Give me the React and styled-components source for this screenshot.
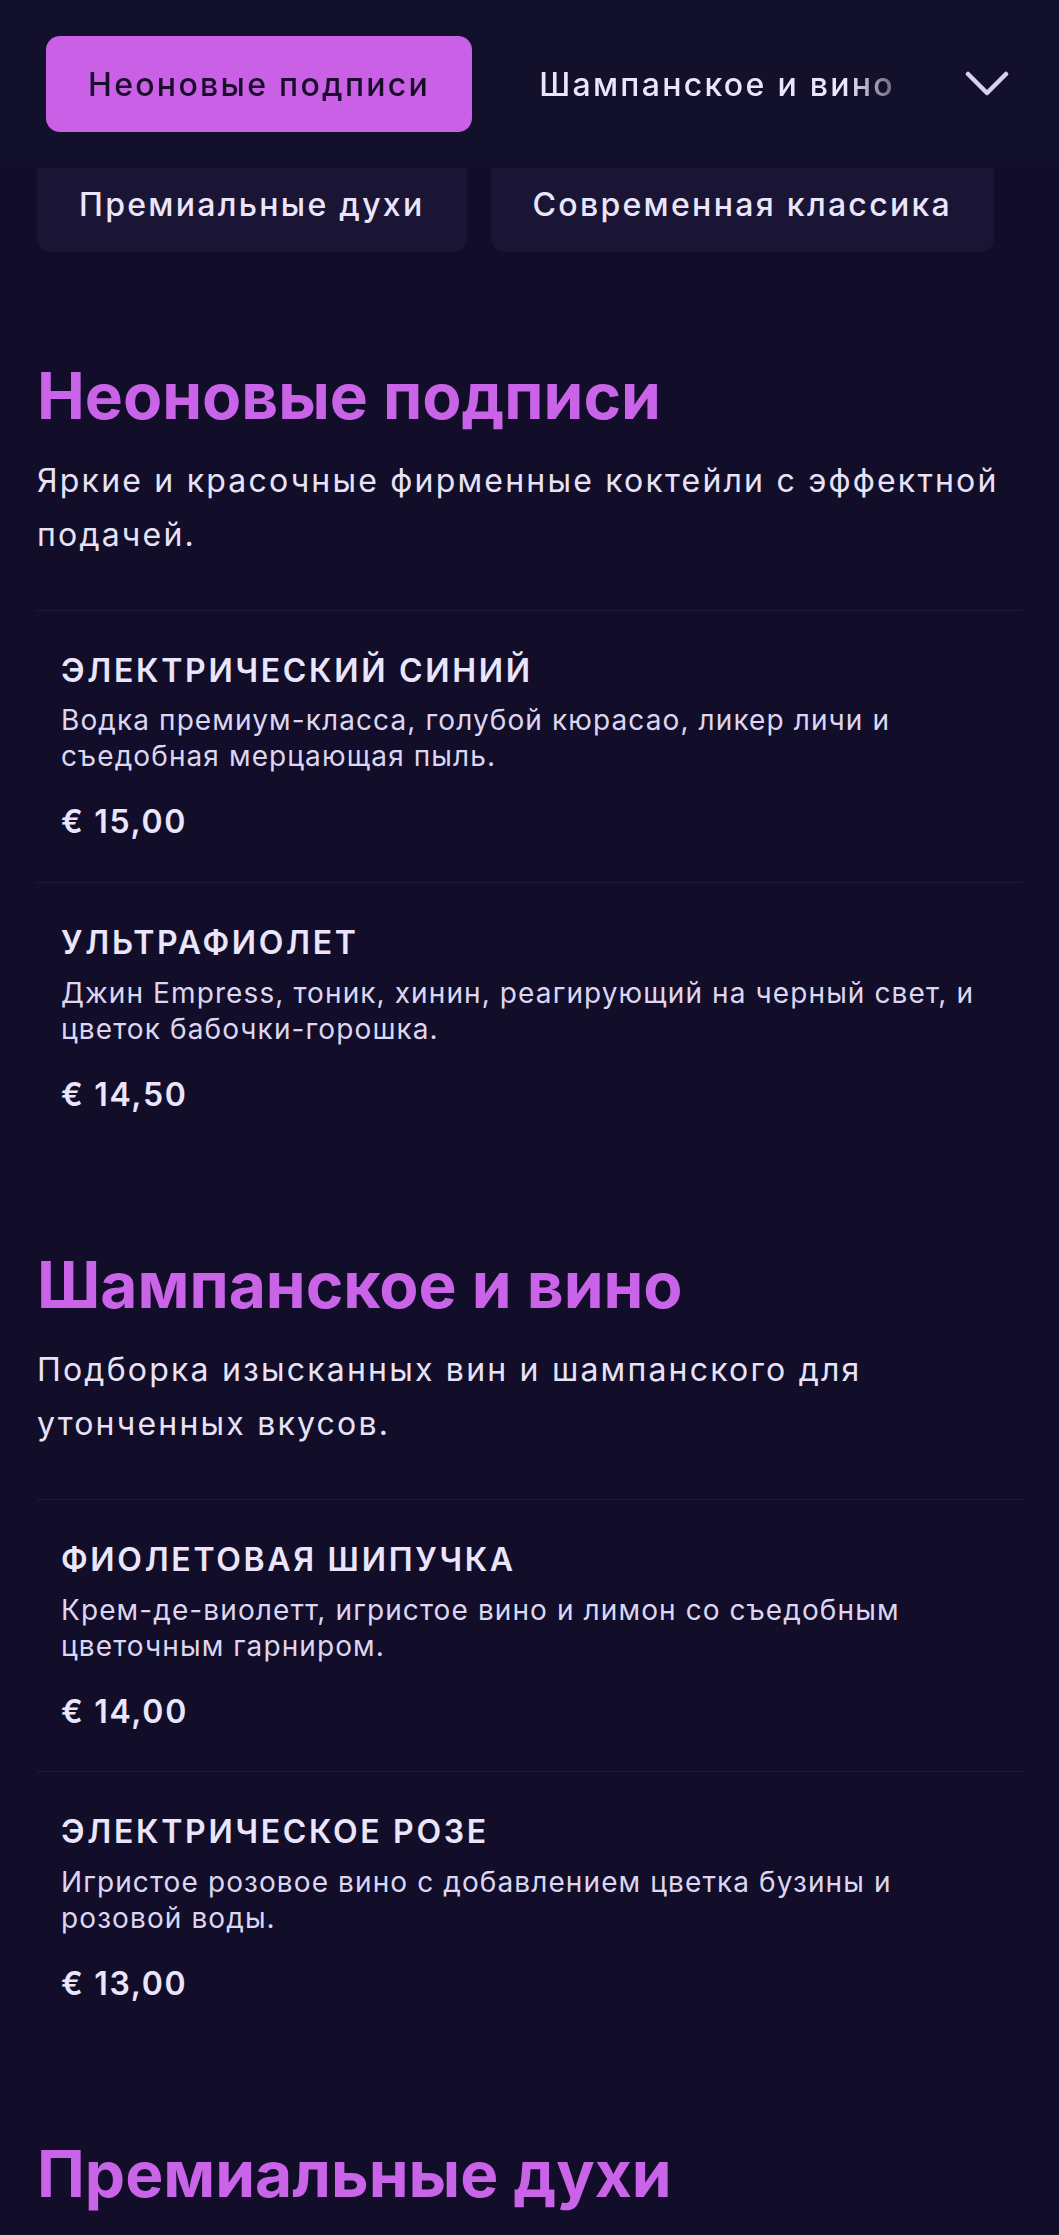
import styled, { createGlobalStyle } from "styled-components";

const GlobalStyle = createGlobalStyle`
  html, body {
    margin: 0;
    padding: 0;
    background: #120e29;
  }
  body {
    font-family: Inter, "Noto Sans", "Liberation Sans", sans-serif;
    color: #ebe5fb;
    -webkit-font-smoothing: antialiased;
  }
  * {
    box-sizing: border-box;
  }
`;

const Page = styled.div`
  width: 1059px;
  min-height: 2235px;
  background: #120e29;
  overflow: hidden;
`;

const Header = styled.header`
  height: 168px;
  display: flex;
  align-items: center;
  padding-left: 46px;
  background: #13102b;
  position: relative;
  z-index: 2;
`;

const TabScroller = styled.div`
  flex: 1;
  display: flex;
  align-items: center;
  gap: 25px;
  overflow: hidden;
  white-space: nowrap;
  mask-image: linear-gradient(to right, #000 calc(100% - 80px), transparent);
`;

const Tab = styled.button`
  flex: none;
  height: 96px;
  padding: 0 42px;
  border: 0;
  border-radius: 14px;
  font-family: inherit;
  font-size: 32px;
  font-weight: 500;
  letter-spacing: 2.3px;
  background: ${(p) => (p.$active ? "#c960e6" : "transparent")};
  color: ${(p) => (p.$active ? "#1a0d2b" : "#ebe5fb")};
`;

const ChevronButton = styled.button`
  flex: none;
  width: 120px;
  margin-right: 12px;
  height: 96px;
  display: flex;
  align-items: center;
  justify-content: center;
  background: transparent;
  border: 0;
  color: #d9d1f2;
`;

const ChipStrip = styled.div`
  height: 84px;
  overflow: hidden;
`;

const ChipRow = styled.div`
  display: flex;
  gap: 24px;
  padding: 0 37px;
  margin-top: -12px;
`;

const Chip = styled.div`
  height: 96px;
  display: flex;
  align-items: center;
  padding: 0 42px;
  border-radius: 14px;
  background: #1b1535;
  font-size: 32px;
  font-weight: 500;
  letter-spacing: 2.3px;
  color: #ebe5fb;
  white-space: nowrap;
`;

const Section = styled.section`
  padding: 106px 37px 0;

  & + & {
    padding-top: 93px;
  }
`;

const SectionTitle = styled.h2`
  margin: 0;
  font-size: 64px;
  line-height: 1.2;
  font-weight: 700;
  color: #c964e8;
`;

const SectionText = styled.p`
  margin: 19px 0 0;
  font-size: 32px;
  line-height: 54px;
  letter-spacing: 2.2px;
  color: #e8e2f8;
`;

const ItemList = styled.div`
  margin-top: 48px;
`;

const Item = styled.article`
  padding: 39px 24px 39px;
  border-top: 1px solid #1f1a39;
`;

const ItemName = styled.h3`
  margin: 0;
  font-size: 32px;
  line-height: 1.3;
  font-weight: 600;
  letter-spacing: 2.7px;
  color: #ebe5fb;
`;

const ItemText = styled.p`
  margin: 11px 0 0;
  font-size: 28px;
  line-height: 36px;
  letter-spacing: 1.1px;
  color: #ddd6f2;
`;

const Price = styled.div`
  margin-top: 27px;
  font-size: 32px;
  line-height: 1.3;
  font-weight: 600;
  letter-spacing: 1.7px;
  color: #ebe5fb;
`;

const sections = [
  {
    title: "Неоновые подписи",
    text: "Яркие и красочные фирменные коктейли с эффектной подачей.",
    items: [
      {
        name: "ЭЛЕКТРИЧЕСКИЙ СИНИЙ",
        text: "Водка премиум-класса, голубой кюрасао, ликер личи и съедобная мерцающая пыль.",
        price: "€ 15,00",
      },
      {
        name: "УЛЬТРАФИОЛЕТ",
        text: "Джин Empress, тоник, хинин, реагирующий на черный свет, и цветок бабочки-горошка.",
        price: "€ 14,50",
      },
    ],
  },
  {
    title: "Шампанское и вино",
    text: "Подборка изысканных вин и шампанского для утонченных вкусов.",
    items: [
      {
        name: "ФИОЛЕТОВАЯ ШИПУЧКА",
        text: "Крем-де-виолетт, игристое вино и лимон со съедобным цветочным гарниром.",
        price: "€ 14,00",
      },
      {
        name: "ЭЛЕКТРИЧЕСКОЕ РОЗЕ",
        text: "Игристое розовое вино с добавлением цветка бузины и розовой воды.",
        price: "€ 13,00",
      },
    ],
  },
  {
    title: "Премиальные духи",
    text: "",
    items: [],
  },
];

const Chevron = () => (
  <svg width="44" height="28" viewBox="0 0 44 28" fill="none">
    <path d="M3 4l19 19L41 4" stroke="currentColor" strokeWidth="4.5" strokeLinecap="round" strokeLinejoin="round" />
  </svg>
);

export default function App() {
  return (
    <Page>
      <GlobalStyle />
      <Header>
        <TabScroller>
          <Tab $active>Неоновые подписи</Tab>
          <Tab>Шампанское и вино</Tab>
        </TabScroller>
        <ChevronButton>
          <Chevron />
        </ChevronButton>
      </Header>
      <ChipStrip>
        <ChipRow>
          <Chip>Премиальные духи</Chip>
          <Chip>Современная классика</Chip>
        </ChipRow>
      </ChipStrip>
      {sections.map((s) => (
        <Section key={s.title}>
          <SectionTitle>{s.title}</SectionTitle>
          {s.text && <SectionText>{s.text}</SectionText>}
          {s.items.length > 0 && (
            <ItemList>
              {s.items.map((it) => (
                <Item key={it.name}>
                  <ItemName>{it.name}</ItemName>
                  <ItemText>{it.text}</ItemText>
                  <Price>{it.price}</Price>
                </Item>
              ))}
            </ItemList>
          )}
        </Section>
      ))}
    </Page>
  );
}
